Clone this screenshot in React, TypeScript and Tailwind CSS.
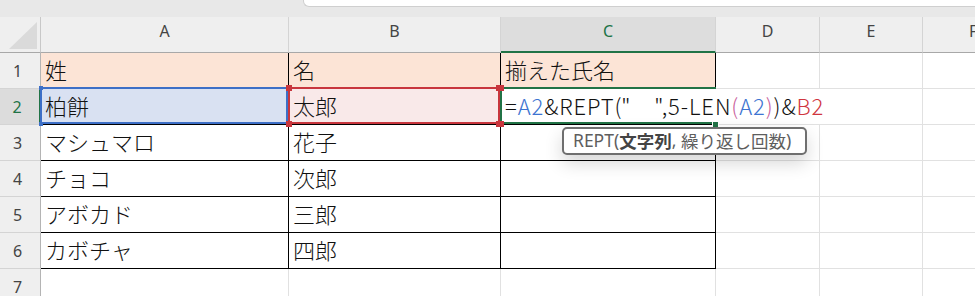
import React from "react";

const cjk = { fontFamily: '"Noto Sans CJK JP", "Noto Sans", sans-serif' };
const ui = { fontFamily: '"Noto Sans", "Noto Sans CJK JP", sans-serif' };

function RowHead({ n, active }: { n: number; active?: boolean }) {
  return (
    <div
      style={ui}
      className={
        active
          ? "w-[41px] shrink-0 flex items-center justify-center pr-[5px] bg-[#dcdcdc] border-r-2 border-r-[#217346] border-b border-b-[#d4d4d4] text-[16px] text-[#217346]"
          : "w-[41px] shrink-0 flex items-center justify-center pr-[5px] bg-[#efefef] border-r border-r-[#b4b4b4] border-b border-b-[#d4d4d4] text-[16px] text-[#444444]"
      }
    >
      {n}
    </div>
  );
}

function Cell({ w, cls, children }: { w: string; cls: string; children?: React.ReactNode }) {
  return (
    <div style={cjk} className={`${w} shrink-0 flex items-center pl-[4px] pb-[2px] text-[22px] font-light text-[#111] whitespace-nowrap ${cls}`}>
      {children}
    </div>
  );
}

const T = "border-r border-b border-black";
const G = "border-r border-b border-[#e1e1e1]";

export default function App() {
  const rows: [number, string, string][] = [
    [3, "マシュマロ", "花子"],
    [4, "チョコ", "次郎"],
    [5, "アボカド", "三郎"],
    [6, "カボチャ", "四郎"],
  ];
  return (
    <div className="w-[975px] h-[296px] overflow-hidden bg-white">
      {/* top band */}
      <div className="flex h-[17px] bg-[#e8e8e8]">
        <div className="w-[303px] shrink-0" />
        <div className="flex-1 h-[7px] bg-white border-l border-b border-[#cfcfcf] rounded-bl-[6px]" />
      </div>

      {/* column headers */}
      <div style={ui} className="flex h-[36px] text-[16px] text-[#444444]">
        <div className="w-[41px] shrink-0 bg-[#efefef] border-r border-r-[#c8c8c8] border-b border-b-[#a8a8a8] flex items-end justify-end pr-[3px] pb-[3px]">
          <svg width="28" height="27" viewBox="0 0 28 27">
            <polygon points="28,0 28,27 0,27" fill="#dadada" />
          </svg>
        </div>
        <div className="w-[248px] shrink-0 bg-[#efefef] border-r border-r-[#d4d4d4] border-b border-b-[#a8a8a8] flex items-center justify-center pb-[8px]">A</div>
        <div className="w-[212px] shrink-0 bg-[#efefef] border-r border-r-[#d4d4d4] border-b border-b-[#a8a8a8] flex items-center justify-center pb-[8px]">B</div>
        <div className="w-[215px] shrink-0 bg-[#dddddd] border-r border-r-[#d4d4d4] border-b-2 border-b-[#217346] flex items-center justify-center pb-[7px] text-[#217346]">C</div>
        <div className="w-[104px] shrink-0 bg-[#efefef] border-r border-r-[#d4d4d4] border-b border-b-[#a8a8a8] flex items-center justify-center pb-[8px]">D</div>
        <div className="w-[103px] shrink-0 bg-[#efefef] border-r border-r-[#d4d4d4] border-b border-b-[#a8a8a8] flex items-center justify-center pb-[8px]">E</div>
        <div className="flex-1 bg-[#efefef] border-b border-b-[#a8a8a8] flex items-center justify-center pb-[8px] pl-[46px]">F</div>
      </div>

      {/* row 1 */}
      <div className="flex h-[36px]">
        <RowHead n={1} />
        <Cell w="w-[248px]" cls={`${T} bg-[#fce4d6]`}>姓</Cell>
        <Cell w="w-[212px]" cls={`${T} bg-[#fce4d6]`}>名</Cell>
        <Cell w="w-[215px]" cls={`${T} bg-[#fce4d6]`}>揃えた氏名</Cell>
        <Cell w="w-[104px]" cls={G} />
        <Cell w="w-[103px]" cls={G} />
        <div className="flex-1 border-b border-[#e1e1e1]" />
      </div>

      {/* row 2 */}
      <div className="flex h-[36px]">
        <RowHead n={2} active />
        <Cell w="w-[248px]" cls={`${T} bg-[#d9e1f2] relative`}>
          柏餅
          <div className="absolute left-[-1px] top-[-2px] right-0 bottom-0 border-2 border-[#3d6fc7]" />
          <div className="absolute left-[-2px] top-[-3px] w-[4px] h-[4px] bg-[#3d6fc7]" />
          <div className="absolute left-[-2px] bottom-[-2px] w-[4px] h-[4px] bg-[#3d6fc7]" />
        </Cell>
        <Cell w="w-[212px]" cls={`${T} bg-[#f9e9e9] relative`}>
          太郎
          <div className="absolute left-[-1px] top-[-2px] right-0 bottom-0 border-2 border-[#c8363d]" />
          <div className="absolute left-[-3px] top-[-4px] w-[6px] h-[6px] bg-[#c8363d]" />
          <div className="absolute right-[-2px] top-[-4px] w-[6px] h-[6px] bg-[#c8363d]" />
          <div className="absolute left-[-3px] bottom-[-3px] w-[6px] h-[6px] bg-[#c8363d]" />
          <div className="absolute right-[-2px] bottom-[-3px] w-[6px] h-[6px] bg-[#c8363d]" />
        </Cell>
        <div style={cjk} className="w-[215px] shrink-0 relative z-20 flex items-stretch pl-[4px] text-[22px] font-light tracking-[0.9px] text-[#111] whitespace-nowrap border-b border-black bg-white">
          <div className="absolute left-[-1px] top-[-2px] right-0 bottom-0 border-t-2 border-l-2 border-b-2 border-[#217346] pointer-events-none" />
          <div className="absolute left-[-3px] top-[-4px] w-[6px] h-[6px] bg-[#c8363d]" />
          <div className="absolute left-[-3px] bottom-[-3px] w-[6px] h-[6px] bg-[#c8363d]" />
          <div className="absolute right-[-3px] bottom-[-4px] w-[7px] h-[7px] bg-[#217346] border border-white" />
          <div className="flex items-center pb-[2px]">
            <span>=</span>
            <span className="text-[#3d74d1]">A2</span>
            <span>&amp;REPT(</span>
          </div>
          <div className="w-px -my-px bg-black -mr-px" />
          <div className="flex items-center pb-[2px]">
            <span>"　",5-LEN</span>
            <span className="text-[#c9609b]">(</span>
            <span className="text-[#3d74d1]">A2</span>
            <span className="text-[#c9609b]">)</span>
            <span>)&amp;</span>
            <span className="text-[#d0363f]">B2</span>
          </div>
          <div
            style={ui}
            className="absolute left-[61px] top-[38px] w-[245px] h-[28px] pl-[9px] flex items-center bg-white border-2 border-[#6f6f6f] rounded-[5px] shadow-[0_8px_18px_rgba(0,0,0,0.16)] text-[17.5px] font-normal tracking-normal text-[#5e5e5e] leading-none"
          >
            <span>REPT(</span>
            <span style={cjk} className="font-bold text-[#444]">文字列</span>
            <span>,&nbsp;</span>
            <span style={cjk}>繰り返し回数</span>
            <span>)</span>
          </div>
        </div>
        <Cell w="w-[104px]" cls="border-b border-[#e1e1e1]" />
        <Cell w="w-[103px]" cls={G} />
        <div className="flex-1 border-b border-[#e1e1e1]" />
      </div>

      {rows.map(([n, a, b]) => (
        <div key={n} className="flex h-[36px]">
          <RowHead n={n} />
          <Cell w="w-[248px]" cls={T}>{a}</Cell>
          <Cell w="w-[212px]" cls={T}>{b}</Cell>
          <Cell w="w-[215px]" cls={T} />
          <Cell w="w-[104px]" cls={G} />
          <Cell w="w-[103px]" cls={G} />
          <div className="flex-1 border-b border-[#e1e1e1]" />
        </div>
      ))}

      {/* row 7 */}
      <div className="flex h-[36px]">
        <RowHead n={7} />
        <Cell w="w-[248px]" cls={G} />
        <Cell w="w-[212px]" cls={G} />
        <Cell w="w-[215px]" cls={G} />
        <Cell w="w-[104px]" cls={G} />
        <Cell w="w-[103px]" cls={G} />
        <div className="flex-1 border-b border-[#e1e1e1]" />
      </div>
    </div>
  );
}
